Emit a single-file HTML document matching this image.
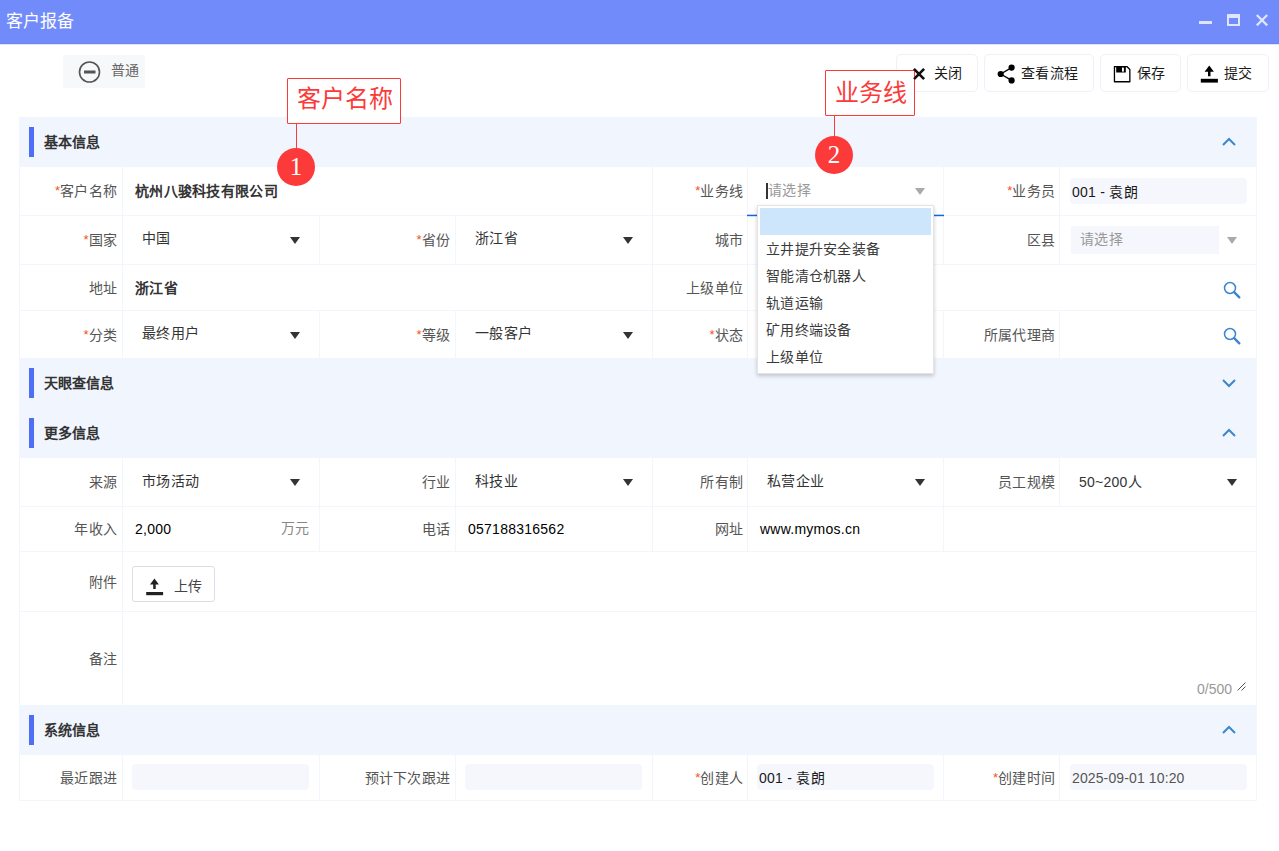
<!DOCTYPE html><html lang="zh-CN"><head><meta charset="utf-8"><style>
*{box-sizing:border-box;margin:0;padding:0}
html,body{width:1279px;height:851px;overflow:hidden;background:#fff}
body{position:relative;font-family:"Liberation Sans",sans-serif;font-size:14px;color:#333}
.abs{position:absolute}
.t{position:absolute;white-space:nowrap;line-height:20px;font-size:14px;letter-spacing:.25px}
.lbl{position:absolute;white-space:nowrap;line-height:20px;font-size:14px;color:#555;text-align:right;letter-spacing:.25px}
.req{color:#f4511e;font-size:13px;position:relative;top:-1px;margin-right:0;letter-spacing:0}
.hl{position:absolute;height:1px;background:#f2f5fc}
.vl{position:absolute;width:1px;background:#f2f5fc}
.sec{position:absolute;left:19px;width:1238px;height:50px;background:#f0f5fe}
.sec .bar{position:absolute;left:10px;top:10px;width:5px;height:30px;background:#4f6ef7}
.sec .st{position:absolute;left:25px;top:15px;line-height:20px;font-weight:bold;font-size:14px;color:#333}
.sec svg{position:absolute;left:1203px;top:20px}
.btn{position:absolute;top:54px;height:38px;border:1px solid #eef1f8;border-radius:5px;background:#fff}
.tri{position:absolute;width:0;height:0;border-left:5px solid transparent;border-right:5px solid transparent;border-top:7px solid #333}
.trig{border-top-color:#aaa}
.inp{position:absolute;background:#f5f7fc;border-radius:4px}
</style></head><body>
<div class="abs" style="left:0;top:0;width:1279px;height:44px;background:#728bfb"></div>
<div class="abs" style="left:0;top:43px;width:1279px;height:1px;background:#6c85f5"></div>
<div class="abs" style="left:0;top:44px;width:1279px;height:1px;background:#dfe5fd"></div>
<div class="t" style="left:6px;top:10px;font-size:17px;line-height:24px;color:#fff;letter-spacing:0">客户报备</div>
<div class="abs" style="left:1199px;top:21px;width:13px;height:3px;background:#dfe5fe"></div>
<div class="abs" style="left:1227px;top:14px;width:13px;height:12px;border:2px solid #dfe5fe;border-top-width:4px"></div>
<svg class="abs" style="left:1255px;top:13px" width="14" height="14" viewBox="0 0 14 14"><path d="M1.8 2L12.2 12.4M12.2 2L1.8 12.4" stroke="#dfe5fe" stroke-width="2.2"/></svg>
<div class="abs" style="left:63px;top:55px;width:82px;height:33px;background:#f7f8fa"></div>
<svg class="abs" style="left:78px;top:60px" width="24" height="24" viewBox="0 0 24 24"><circle cx="11.5" cy="12" r="10" fill="none" stroke="#555" stroke-width="1.6"/><rect x="6" y="10.5" width="11.5" height="3" fill="#555"/></svg>
<div class="t" style="left:111px;top:60px;color:#666">普通</div>
<div class="btn" style="left:896px;width:82px"></div>
<div class="btn" style="left:984px;width:110px"></div>
<div class="btn" style="left:1100px;width:81px"></div>
<div class="btn" style="left:1187px;width:82px"></div>
<svg class="abs" style="left:912px;top:67px" width="14" height="14" viewBox="0 0 14 14"><path d="M2 2L12 12M12 2L2 12" stroke="#111" stroke-width="2.4"/></svg>
<div class="t" style="left:934px;top:63px;color:#1a1a1a">关闭</div>
<svg class="abs" style="left:996px;top:63px" width="21" height="22" viewBox="0 0 21 22"><path d="M4.7 11L15.6 4.6M4.7 11L15.6 17.4" stroke="#000" stroke-width="1.4"/><circle cx="4.7" cy="11" r="3.1" fill="#000"/><circle cx="15.6" cy="4.6" r="3.1" fill="#000"/><circle cx="15.6" cy="17.4" r="3.1" fill="#000"/></svg>
<div class="t" style="left:1021px;top:63px;color:#1a1a1a">查看流程</div>
<svg class="abs" style="left:1113px;top:65px" width="19" height="19" viewBox="0 0 19 19"><path d="M1.45 1.55H13.9L16.85 4.5V16.75H1.45Z" fill="none" stroke="#000" stroke-width="1.3" stroke-linejoin="round"/><rect x="3.2" y="1.8" width="9.6" height="5.7" fill="#000"/><rect x="9" y="2.6" width="1.9" height="4" fill="#fff"/></svg>
<div class="t" style="left:1137px;top:63px;color:#1a1a1a">保存</div>
<svg class="abs" style="left:1200px;top:65px" width="19" height="19" viewBox="0 0 19 19"><path d="M9.25 0.6L4.6 6.7H8V11.3H10.5V6.7H13.9Z" fill="#000"/><rect x="0.8" y="13.8" width="17.1" height="3.8" fill="#000"/></svg>
<div class="t" style="left:1224px;top:63px;color:#1a1a1a">提交</div>
<div class="sec" style="top:117px"><div class="bar"></div><div class="st">基本信息</div><svg width="14" height="10" viewBox="0 0 14 10"><path d="M1 8L7 2L13 8" fill="none" stroke="#3b87cc" stroke-width="2"/></svg></div>
<div class="vl" style="left:19px;top:167px;height:48px"></div>
<div class="vl" style="left:1256px;top:167px;height:48px"></div>
<div class="vl" style="left:122px;top:167px;height:48px"></div>
<div class="vl" style="left:652px;top:167px;height:48px"></div>
<div class="vl" style="left:747px;top:167px;height:48px"></div>
<div class="vl" style="left:943px;top:167px;height:48px"></div>
<div class="vl" style="left:1059px;top:167px;height:48px"></div>
<div class="hl" style="left:19px;top:215px;width:1238px"></div>
<div class="lbl" style="right:1162px;top:181px"><span class="req">*</span>客户名称</div>
<div class="t" style="left:135px;top:181px;color:#333;font-weight:bold;letter-spacing:.3px">杭州八骏科技有限公司</div>
<div class="lbl" style="right:536px;top:181px"><span class="req">*</span>业务线</div>
<div class="lbl" style="right:224px;top:181px"><span class="req">*</span>业务员</div>
<div class="inp" style="left:1070px;top:178px;width:177px;height:26px"></div>
<div class="t" style="left:1072px;top:182px;color:#1a1a1a;">001 - 袁朗</div>
<div class="vl" style="left:19px;top:215px;height:49px"></div>
<div class="vl" style="left:1256px;top:215px;height:49px"></div>
<div class="vl" style="left:122px;top:215px;height:49px"></div>
<div class="vl" style="left:319px;top:215px;height:49px"></div>
<div class="vl" style="left:455px;top:215px;height:49px"></div>
<div class="vl" style="left:652px;top:215px;height:49px"></div>
<div class="vl" style="left:747px;top:215px;height:49px"></div>
<div class="vl" style="left:943px;top:215px;height:49px"></div>
<div class="vl" style="left:1059px;top:215px;height:49px"></div>
<div class="hl" style="left:19px;top:264px;width:1238px"></div>
<div class="lbl" style="right:1162px;top:230px"><span class="req">*</span>国家</div>
<div class="t" style="left:142px;top:228px;color:#333;">中国</div>
<div class="tri" style="left:290px;top:237px"></div>
<div class="lbl" style="right:829px;top:230px"><span class="req">*</span>省份</div>
<div class="t" style="left:475px;top:228px;color:#333;">浙江省</div>
<div class="tri" style="left:623px;top:237px"></div>
<div class="lbl" style="right:536px;top:230px">城市</div>
<div class="lbl" style="right:224px;top:230px">区县</div>
<div class="inp" style="left:1071px;top:226px;width:148px;height:28px;border-radius:0"></div>
<div class="t" style="left:1080px;top:229px;color:#999;">请选择</div>
<div class="tri trig" style="left:1227px;top:237px"></div>
<div class="vl" style="left:19px;top:264px;height:46px"></div>
<div class="vl" style="left:1256px;top:264px;height:46px"></div>
<div class="vl" style="left:122px;top:264px;height:46px"></div>
<div class="vl" style="left:652px;top:264px;height:46px"></div>
<div class="vl" style="left:747px;top:264px;height:46px"></div>
<div class="hl" style="left:19px;top:310px;width:1238px"></div>
<div class="lbl" style="right:1162px;top:278px">地址</div>
<div class="t" style="left:135px;top:278px;color:#333;font-weight:bold;letter-spacing:.3px">浙江省</div>
<div class="lbl" style="right:536px;top:278px">上级单位</div>
<div class="vl" style="left:19px;top:310px;height:48px"></div>
<div class="vl" style="left:1256px;top:310px;height:48px"></div>
<div class="vl" style="left:122px;top:310px;height:48px"></div>
<div class="vl" style="left:319px;top:310px;height:48px"></div>
<div class="vl" style="left:455px;top:310px;height:48px"></div>
<div class="vl" style="left:652px;top:310px;height:48px"></div>
<div class="vl" style="left:747px;top:310px;height:48px"></div>
<div class="vl" style="left:943px;top:310px;height:48px"></div>
<div class="vl" style="left:1059px;top:310px;height:48px"></div>
<div class="hl" style="left:19px;top:358px;width:1238px"></div>
<div class="lbl" style="right:1162px;top:325px"><span class="req">*</span>分类</div>
<div class="t" style="left:142px;top:323px;color:#333;">最终用户</div>
<div class="tri" style="left:290px;top:332px"></div>
<div class="lbl" style="right:829px;top:325px"><span class="req">*</span>等级</div>
<div class="t" style="left:475px;top:323px;color:#333;">一般客户</div>
<div class="tri" style="left:623px;top:332px"></div>
<div class="lbl" style="right:536px;top:325px"><span class="req">*</span>状态</div>
<div class="lbl" style="right:224px;top:325px">所属代理商</div>
<svg class="abs" style="left:1223px;top:281px" width="18" height="18" viewBox="0 0 18 18"><circle cx="7" cy="7" r="5.5" fill="none" stroke="#3d84d0" stroke-width="1.5"/><path d="M11.2 11.2L16.3 16.3" stroke="#3d84d0" stroke-width="2.4" stroke-linecap="round"/></svg>
<svg class="abs" style="left:1223px;top:327px" width="18" height="18" viewBox="0 0 18 18"><circle cx="7" cy="7" r="5.5" fill="none" stroke="#3d84d0" stroke-width="1.5"/><path d="M11.2 11.2L16.3 16.3" stroke="#3d84d0" stroke-width="2.4" stroke-linecap="round"/></svg>
<div class="sec" style="top:358px"><div class="bar"></div><div class="st">天眼查信息</div><svg width="14" height="10" viewBox="0 0 14 10"><path d="M1 2L7 8L13 2" fill="none" stroke="#3b87cc" stroke-width="2"/></svg></div>
<div class="sec" style="top:408px"><div class="bar"></div><div class="st">更多信息</div><svg width="14" height="10" viewBox="0 0 14 10"><path d="M1 8L7 2L13 8" fill="none" stroke="#3b87cc" stroke-width="2"/></svg></div>
<div class="vl" style="left:19px;top:458px;height:48px"></div>
<div class="vl" style="left:1256px;top:458px;height:48px"></div>
<div class="vl" style="left:122px;top:458px;height:48px"></div>
<div class="vl" style="left:319px;top:458px;height:48px"></div>
<div class="vl" style="left:455px;top:458px;height:48px"></div>
<div class="vl" style="left:652px;top:458px;height:48px"></div>
<div class="vl" style="left:747px;top:458px;height:48px"></div>
<div class="vl" style="left:943px;top:458px;height:48px"></div>
<div class="vl" style="left:1059px;top:458px;height:48px"></div>
<div class="hl" style="left:19px;top:506px;width:1238px"></div>
<div class="lbl" style="right:1162px;top:472px">来源</div>
<div class="t" style="left:142px;top:471px;color:#333;">市场活动</div>
<div class="tri" style="left:290px;top:479px"></div>
<div class="lbl" style="right:829px;top:472px">行业</div>
<div class="t" style="left:475px;top:471px;color:#333;">科技业</div>
<div class="tri" style="left:623px;top:479px"></div>
<div class="lbl" style="right:536px;top:472px">所有制</div>
<div class="t" style="left:767px;top:471px;color:#333;">私营企业</div>
<div class="tri" style="left:915px;top:479px"></div>
<div class="lbl" style="right:224px;top:472px">员工规模</div>
<div class="t" style="left:1079px;top:472px;color:#333;">50~200人</div>
<div class="tri" style="left:1227px;top:479px"></div>
<div class="vl" style="left:19px;top:506px;height:45px"></div>
<div class="vl" style="left:1256px;top:506px;height:45px"></div>
<div class="vl" style="left:122px;top:506px;height:45px"></div>
<div class="vl" style="left:319px;top:506px;height:45px"></div>
<div class="vl" style="left:455px;top:506px;height:45px"></div>
<div class="vl" style="left:652px;top:506px;height:45px"></div>
<div class="vl" style="left:747px;top:506px;height:45px"></div>
<div class="vl" style="left:943px;top:506px;height:45px"></div>
<div class="hl" style="left:19px;top:551px;width:1238px"></div>
<div class="lbl" style="right:1162px;top:519px">年收入</div>
<div class="t" style="left:135px;top:519px;color:#000;">2,000</div>
<div class="t" style="left:281px;top:518px;color:#888;">万元</div>
<div class="lbl" style="right:829px;top:519px">电话</div>
<div class="t" style="left:468px;top:519px;color:#000;">057188316562</div>
<div class="lbl" style="right:536px;top:519px">网址</div>
<div class="t" style="left:760px;top:519px;color:#000;">www.mymos.cn</div>
<div class="vl" style="left:19px;top:551px;height:60px"></div>
<div class="vl" style="left:1256px;top:551px;height:60px"></div>
<div class="vl" style="left:122px;top:551px;height:60px"></div>
<div class="hl" style="left:19px;top:611px;width:1238px"></div>
<div class="lbl" style="right:1162px;top:572px">附件</div>
<div class="abs" style="left:132px;top:566px;width:83px;height:36px;border:1px solid #d9dee7;border-radius:3px;background:#fff"></div>
<svg class="abs" style="left:145px;top:577px" width="20" height="20" viewBox="0 0 20 20"><path d="M9.45 1.6L5 7.6H8.2V11.9H10.7V7.6H13.9Z" fill="#222"/><rect x="1.2" y="15" width="16.9" height="3.2" fill="#222"/></svg>
<div class="t" style="left:174px;top:576px;color:#444;">上传</div>
<div class="vl" style="left:19px;top:611px;height:94px"></div>
<div class="vl" style="left:1256px;top:611px;height:94px"></div>
<div class="vl" style="left:122px;top:611px;height:94px"></div>
<div class="hl" style="left:19px;top:705px;width:1238px"></div>
<div class="lbl" style="right:1162px;top:649px">备注</div>
<div class="t" style="left:1197px;top:679px;color:#999;letter-spacing:0">0/500</div>
<svg class="abs" style="left:1236px;top:681px" width="11" height="11" viewBox="0 0 11 11"><path d="M1.5 9.5L9.5 1.5M5.5 9.5L9.5 5.5" stroke="#555" stroke-width="1"/></svg>
<div class="sec" style="top:705px"><div class="bar"></div><div class="st">系统信息</div><svg width="14" height="10" viewBox="0 0 14 10"><path d="M1 8L7 2L13 8" fill="none" stroke="#3b87cc" stroke-width="2"/></svg></div>
<div class="vl" style="left:19px;top:755px;height:45px"></div>
<div class="vl" style="left:1256px;top:755px;height:45px"></div>
<div class="vl" style="left:122px;top:755px;height:45px"></div>
<div class="vl" style="left:319px;top:755px;height:45px"></div>
<div class="vl" style="left:455px;top:755px;height:45px"></div>
<div class="vl" style="left:652px;top:755px;height:45px"></div>
<div class="vl" style="left:747px;top:755px;height:45px"></div>
<div class="vl" style="left:943px;top:755px;height:45px"></div>
<div class="vl" style="left:1059px;top:755px;height:45px"></div>
<div class="hl" style="left:19px;top:800px;width:1238px"></div>
<div class="lbl" style="right:1162px;top:768px">最近跟进</div>
<div class="inp" style="left:132px;top:764px;width:177px;height:26px"></div>
<div class="lbl" style="right:829px;top:768px">预计下次跟进</div>
<div class="inp" style="left:465px;top:764px;width:177px;height:26px"></div>
<div class="lbl" style="right:536px;top:768px"><span class="req">*</span>创建人</div>
<div class="inp" style="left:757px;top:764px;width:177px;height:26px"></div>
<div class="t" style="left:759px;top:768px;color:#1a1a1a;">001 - 袁朗</div>
<div class="lbl" style="right:224px;top:768px"><span class="req">*</span>创建时间</div>
<div class="inp" style="left:1070px;top:764px;width:177px;height:26px"></div>
<div class="t" style="left:1072px;top:768px;color:#555;letter-spacing:.12px">2025-09-01 10:20</div>
<svg class="abs" style="left:747px;top:210px" width="197" height="10"><rect x="0" y="4.7" width="197" height="1.5" fill="#0f6ad8"/></svg>
<div class="abs" style="left:766px;top:183px;width:1.5px;height:16px;background:#333"></div>
<div class="t" style="left:768px;top:180px;color:#999;">请选择</div>
<div class="tri trig" style="left:915px;top:188px"></div>
<div class="abs" style="left:757px;top:205px;width:177px;height:169px;background:#fff;border:1px solid #e4e4e4;box-shadow:0 2px 4px rgba(0,0,0,.2)"></div>
<div class="abs" style="left:760px;top:208px;width:171px;height:27px;background:#cde6fb"></div>
<div class="t" style="left:766px;top:239px;color:#3a3a3a;">立井提升安全装备</div>
<div class="t" style="left:766px;top:266px;color:#3a3a3a;">智能清仓机器人</div>
<div class="t" style="left:766px;top:293px;color:#3a3a3a;">轨道运输</div>
<div class="t" style="left:766px;top:320px;color:#3a3a3a;">矿用终端设备</div>
<div class="t" style="left:766px;top:347px;color:#3a3a3a;">上级单位</div>
<div class="abs" style="left:287px;top:78px;width:114px;height:46px;border:1.5px solid #fc3a3a;background:#fff;border-radius:1px"></div>
<div class="t" style="left:297px;top:84px;font-size:24px;line-height:30px;color:#fc3a3a;letter-spacing:0">客户名称</div>
<div class="abs" style="left:295.5px;top:123px;width:1.5px;height:26px;background:#fc3a3a"></div>
<div class="abs" style="left:277px;top:148px;width:38px;height:38px;border-radius:50%;background:#fc3a3a"></div>
<div class="t" style="left:277px;top:152px;width:38px;text-align:center;font-family:'Liberation Serif',serif;font-size:25px;line-height:30px;color:#fff">1</div>
<div class="abs" style="left:825px;top:70px;width:90px;height:46px;border:1.5px solid #fc3a3a;background:#fff;border-radius:1px"></div>
<div class="t" style="left:835px;top:78px;font-size:24px;line-height:30px;color:#fc3a3a;letter-spacing:0">业务线</div>
<div class="abs" style="left:833.5px;top:115px;width:1.5px;height:22px;background:#fc3a3a"></div>
<div class="abs" style="left:815px;top:136px;width:38px;height:38px;border-radius:50%;background:#fc3a3a"></div>
<div class="t" style="left:815px;top:140px;width:38px;text-align:center;font-family:'Liberation Serif',serif;font-size:25px;line-height:30px;color:#fff">2</div>
<svg class="abs" style="left:912px;top:67px" width="14" height="14" viewBox="0 0 14 14"><path d="M2 2L12 12M12 2L2 12" stroke="#111" stroke-width="2.4"/></svg>
</body></html>
